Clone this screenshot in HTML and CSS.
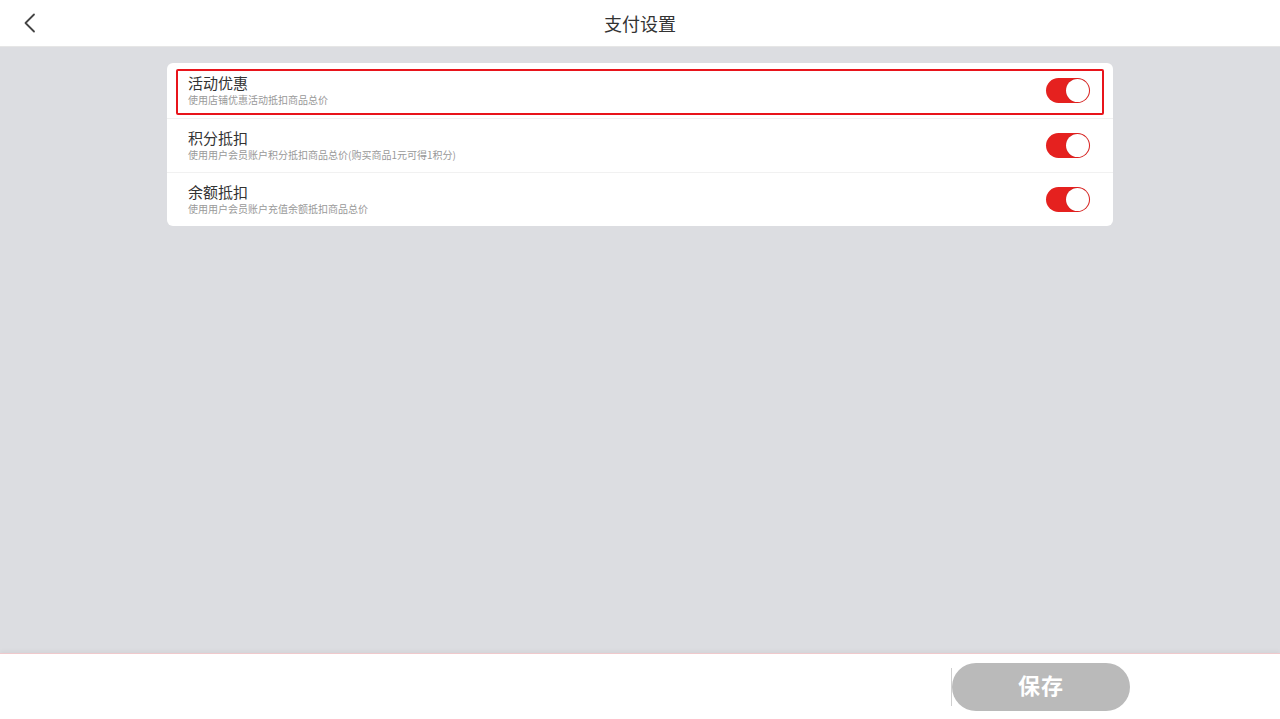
FILE: index.html
```html
<!DOCTYPE html>
<html lang="zh">
<head>
<meta charset="utf-8">
<link rel="stylesheet" href="styles.css">
</head>
<body>
<div class="app">
  <header class="topbar">
    <span class="back">
      <svg width="14" height="20" viewBox="0 0 14 20"><path d="M11 1.5 L2.5 10 L11 18.5" fill="none" stroke="#444" stroke-width="1.8" stroke-linecap="round" stroke-linejoin="round"/></svg>
    </span>
    <h1 class="title">支付设置</h1>
  </header>
  <main class="content">
    <section class="card">
      <div class="row row-active">
        <div class="texts">
          <div class="name">活动优惠</div>
          <div class="desc">使用店铺优惠活动抵扣商品总价</div>
        </div>
        <span class="switch"><span class="knob"></span></span>
      </div>
      <div class="row">
        <div class="texts">
          <div class="name">积分抵扣</div>
          <div class="desc">使用用户会员账户积分抵扣商品总价(购买商品1元可得1积分)</div>
        </div>
        <span class="switch"><span class="knob"></span></span>
      </div>
      <div class="row">
        <div class="texts">
          <div class="name">余额抵扣</div>
          <div class="desc">使用用户会员账户充值余额抵扣商品总价</div>
        </div>
        <span class="switch"><span class="knob"></span></span>
      </div>
    </section>
  </main>
  <footer class="bottombar">
    <span class="divider"></span>
    <button class="save">保存</button>
  </footer>
</div>
</body>
</html>
```
FILE: styles.css
```css
* { box-sizing: border-box; }
html, body { margin: 0; padding: 0; }
body {
  font-family: "Noto Sans CJK SC", "Noto Sans", sans-serif;
  color: #333;
  background: #dcdde1;
}
.app {
  width: 1280px;
  height: 719px;
  display: flex;
  flex-direction: column;
  overflow: hidden;
}
.topbar {
  height: 47px;
  flex: none;
  background: #fff;
  border-bottom: 1px solid #e6e6e6;
  display: flex;
  align-items: center;
  justify-content: center;
  position: relative;
}
.back {
  position: absolute;
  left: 23px;
  top: 13px;
  display: flex;
}
.title {
  margin: 0;
  font-size: 18px;
  font-weight: 400;
  color: #333;
  line-height: 1;
}
.content {
  flex: 1;
  background: #dcdde1;
  padding: 16px 167px 0;
}
.card {
  background: #fff;
  border-radius: 6px;
  overflow: hidden;
}
.row {
  height: 54px;
  display: flex;
  align-items: center;
  justify-content: space-between;
  padding: 0 23px 0 21px;
  border-top: 1px solid #f1f1f1;
  position: relative;
}
.row:first-child { border-top: none; height: 55px; }
.row-active::after {
  content: "";
  position: absolute;
  left: 9px;
  right: 9px;
  top: 6px;
  bottom: 3px;
  border: 2px solid #e8141b;
  border-radius: 2px;
}
.texts { display: flex; flex-direction: column; }
.name {
  font-size: 15px;
  line-height: 18px;
  color: #333;
}
.desc {
  font-size: 10px;
  line-height: 14px;
  color: #999;
  margin-top: 1px;
}
.switch {
  width: 44px;
  height: 25px;
  border-radius: 13px;
  background: #e5211f;
  display: flex;
  align-items: center;
  justify-content: flex-end;
  padding: 1px;
}
.knob {
  width: 23px;
  height: 23px;
  border-radius: 50%;
  background: #fff;
  box-shadow: 0 0 1px rgba(0,0,0,0.3);
}
.bottombar {
  height: 66px;
  flex: none;
  background: #fff;
  border-top: 1px solid #efc9cc;
  box-shadow: 0 -2px 4px rgba(0,0,0,0.04);
  display: flex;
  align-items: center;
  padding-left: 951px;
}
.divider {
  width: 1px;
  height: 38px;
  background: #cfcfcf;
}
.save {
  width: 178px;
  height: 48px;
  border: none;
  border-radius: 24px;
  background: #bababa;
  color: #fff;
  font-family: "Noto Sans CJK SC", sans-serif;
  font-size: 22px;
  font-weight: 700;
  line-height: 1;
  letter-spacing: 1px;
  padding: 0 0 5px;
}
```
